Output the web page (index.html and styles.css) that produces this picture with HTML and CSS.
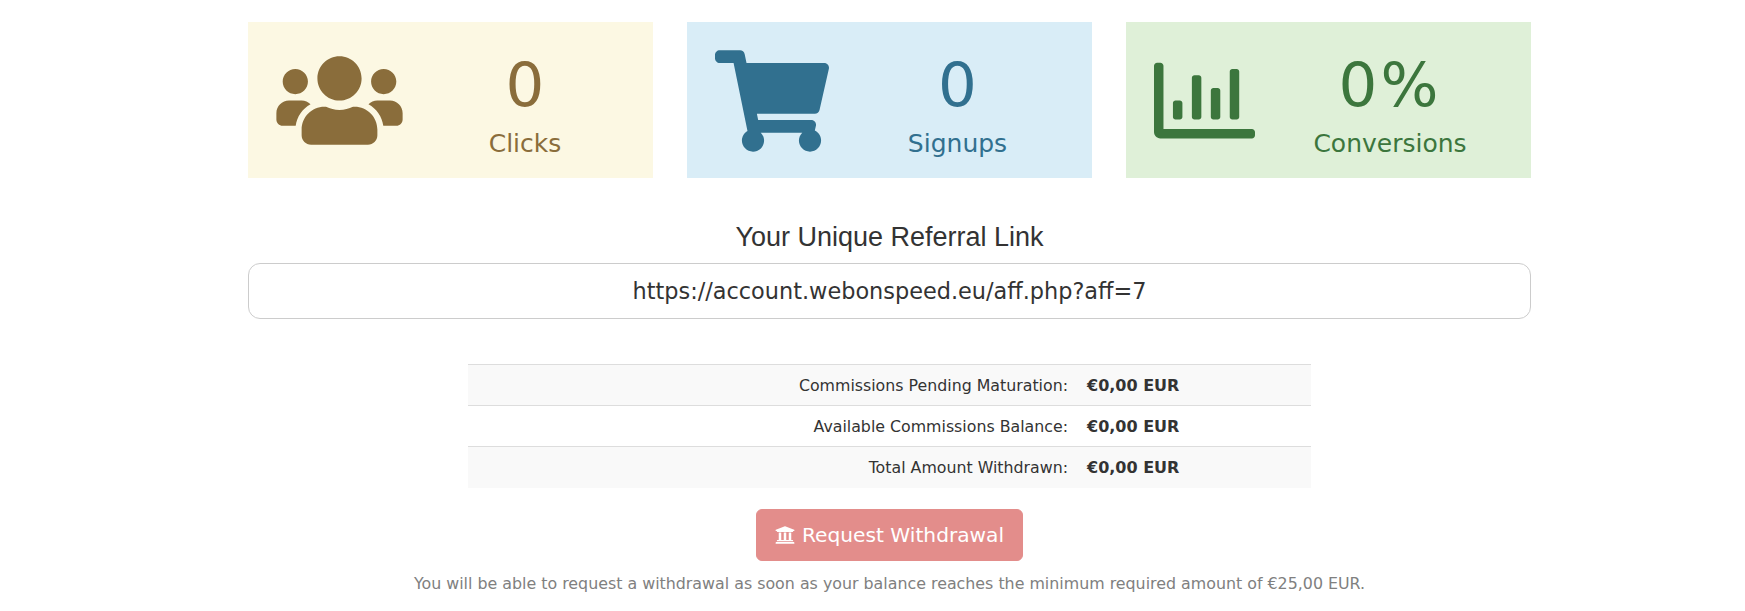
FILE: index.html
```html
<!DOCTYPE html>
<html lang="en">
<head>
<meta charset="utf-8">
<title>Affiliates</title>
<link rel="stylesheet" href="styles.css">
</head>
<body>
<main class="page">
  <section class="stats">
    <div class="card card-clicks">
      <svg class="icon icon-users" viewBox="0 0 640 512" aria-hidden="true"><path d="M96 224c35.3 0 64-28.7 64-64s-28.7-64-64-64-64 28.7-64 64 28.7 64 64 64zm448 0c35.3 0 64-28.7 64-64s-28.7-64-64-64-64 28.7-64 64 28.7 64 64 64zm32 32h-64c-17.6 0-33.5 7.1-45.1 18.6 40.3 22.1 68.9 62 75.1 109.4h66c17.7 0 32-14.3 32-32v-32c0-35.3-28.7-64-64-64zm-256 0c61.9 0 112-50.1 112-112S381.9 32 320 32 208 82.1 208 144s50.1 112 112 112zm76.8 32h-8.3c-20.8 10-43.9 16-68.5 16s-47.6-6-68.5-16h-8.3C179.6 288 128 339.6 128 403.2V432c0 26.5 21.5 48 48 48h288c26.5 0 48-21.5 48-48v-28.8c0-63.6-51.6-115.2-115.2-115.2zm-223.7-13.4C161.5 263.1 145.6 256 128 256H64c-35.3 0-64 28.7-64 64v32c0 17.7 14.3 32 32 32h65.9c6.3-47.4 34.9-87.3 75.2-109.4z"/></svg>
      <div class="card-text"><div class="num">0</div><div class="label">Clicks</div></div>
    </div>
    <div class="card card-signups">
      <svg class="icon icon-cart" viewBox="0 0 576 512" aria-hidden="true"><path d="M528.12 301.319l47.273-208C578.806 78.301 567.391 64 551.99 64H159.208l-9.166-44.81C147.758 8.021 137.93 0 126.529 0H24C10.745 0 0 10.745 0 24v16c0 13.255 10.745 24 24 24h69.883l70.248 343.435C147.325 417.1 136 435.222 136 456c0 30.928 25.072 56 56 56s56-25.072 56-56c0-15.674-6.447-29.835-16.824-40h209.647C430.447 426.165 424 440.326 424 456c0 30.928 25.072 56 56 56s56-25.072 56-56c0-22.172-12.888-41.332-31.579-50.405l5.517-24.276c3.413-15.018-8.002-29.319-23.403-29.319H218.117l-6.545-32h293.145c11.206 0 20.92-7.754 23.403-18.681z"/></svg>
      <div class="card-text"><div class="num">0</div><div class="label">Signups</div></div>
    </div>
    <div class="card card-conv">
      <svg class="icon icon-chart" viewBox="0 0 512 512" aria-hidden="true"><path d="M396.8 352h22.4c6.4 0 12.8-6.4 12.8-12.8V108.8c0-6.4-6.4-12.8-12.8-12.8h-22.4c-6.4 0-12.8 6.4-12.8 12.8v230.4c0 6.4 6.4 12.8 12.8 12.8zm-192 0h22.4c6.4 0 12.8-6.4 12.8-12.8V140.8c0-6.4-6.4-12.8-12.8-12.8h-22.4c-6.4 0-12.8 6.4-12.8 12.8v198.4c0 6.4 6.4 12.8 12.8 12.8zm96 0h22.4c6.4 0 12.8-6.4 12.8-12.8V204.8c0-6.4-6.4-12.8-12.8-12.8h-22.4c-6.4 0-12.8 6.4-12.8 12.8v134.4c0 6.4 6.4 12.8 12.8 12.8zM496 400H48V80c0-8.84-7.16-16-16-16H16C7.16 64 0 71.16 0 80v336c0 17.67 14.33 32 32 32h464c8.84 0 16-7.16 16-16v-16c0-8.84-7.16-16-16-16zm-387.2-48h22.4c6.4 0 12.8-6.4 12.8-12.8v-70.4c0-6.4-6.4-12.8-12.8-12.8h-22.4c-6.4 0-12.8 6.4-12.8 12.8v70.4c0 6.4 6.4 12.8 12.8 12.8z"/></svg>
      <div class="card-text"><div class="num num-pct">0%</div><div class="label">Conversions</div></div>
    </div>
  </section>

  <h2 class="ref-title">Your Unique Referral Link</h2>
  <div class="ref-link">https://account.webonspeed.eu/aff.php?aff=7</div>

  <table class="balances">
    <tr><td class="cell-label">Commissions Pending Maturation:</td><td class="cell-value">€0,00 EUR</td></tr>
    <tr><td class="cell-label">Available Commissions Balance:</td><td class="cell-value">€0,00 EUR</td></tr>
    <tr><td class="cell-label">Total Amount Withdrawn:</td><td class="cell-value">€0,00 EUR</td></tr>
  </table>

  <div class="actions">
    <button class="withdraw" type="button">
      <svg class="icon-bank" viewBox="0 0 512 512" aria-hidden="true"><path d="M496 128v16a8 8 0 0 1-8 8h-24v12c0 6.627-5.373 12-12 12H60c-6.627 0-12-5.373-12-12v-12H24a8 8 0 0 1-8-8v-16a8 8 0 0 1 4.941-7.392l232-88a7.996 7.996 0 0 1 6.118 0l232 88A8 8 0 0 1 496 128zm-24 304H40c-13.255 0-24 10.745-24 24v16a8 8 0 0 0 8 8h464a8 8 0 0 0 8-8v-16c0-13.255-10.745-24-24-24zM96 192v192H60c-6.627 0-12 5.373-12 12v20h416v-20c0-6.627-5.373-12-12-12h-36V192h-64v192h-64V192h-64v192h-64V192H96z"/></svg>
      Request Withdrawal
    </button>
    <p class="note">You will be able to request a withdrawal as soon as your balance reaches the minimum required amount of €25,00 EUR.</p>
  </div>
</main>
</body>
</html>
```

FILE: styles.css
```css
* { box-sizing: border-box; }
html, body { margin: 0; background: #fff; }
body { font-family: "DejaVu Sans", Verdana, sans-serif; color: #333; overflow: hidden; }
.page { width: 1283px; margin-left: 248px; padding-top: 22px; }
.stats { display: flex; gap: 34px; }
.card { flex: 1 1 0; height: 156px; display: flex; align-items: center; padding: 0 6px 0 28px; }
.card-clicks { background: #fcf8e3; color: #8a6d3b; }
.card-signups { background: #d9edf7; color: #31708f; }
.card-conv { background: #dff0d8; color: #3c763d; }
.icon { display: block; flex: none; fill: currentColor; }
.icon-users { width: 127px; height: 101px; }
.icon-cart { width: 114px; height: 102px; margin-top: 2px; }
.icon-chart { width: 101px; height: 101px; }
.card-text { flex: 1; text-align: center; }
.num { font-size: 61px; line-height: 70px; margin-top: 9px; }
.num-pct { letter-spacing: 3px; }
.label { font-size: 25px; line-height: 30px; margin-top: 9px; }
.ref-title { margin: 42px 0 0; font: 400 27px/34px "Liberation Sans", Arial, sans-serif; text-align: center; color: #333; }
.ref-link { margin-top: 9px; height: 56px; border: 1px solid #ccc; border-radius: 12px; display: flex; align-items: center; justify-content: center; font-size: 22.4px; color: #333; }
.balances { width: 843px; margin: 45px 0 0 220px; border-collapse: collapse; font-size: 16px; }
.balances td { height: 41px; padding: 0; border-top: 1px solid #ddd; }
.balances tr:nth-child(odd) { background: #f9f9f9; }
.cell-label { width: 619px; text-align: right; padding-right: 19px !important; font-size: 15.8px; }
.cell-value { font-weight: 700; }
.actions { text-align: center; }
.withdraw { display: inline-flex; align-items: center; gap: 7px; margin-top: 21px; height: 52px; width: 267px; justify-content: center; border: 1px solid #e38d8b; border-radius: 6px; background: #e38d8b; color: #fff; font: 400 20.2px "DejaVu Sans", Verdana, sans-serif; padding: 0; }
.icon-bank { width: 20px; height: 20px; fill: currentColor; flex: none; }
.note { margin: 12px 0 0; font-size: 15.85px; line-height: 22px; color: #808080; }
```
